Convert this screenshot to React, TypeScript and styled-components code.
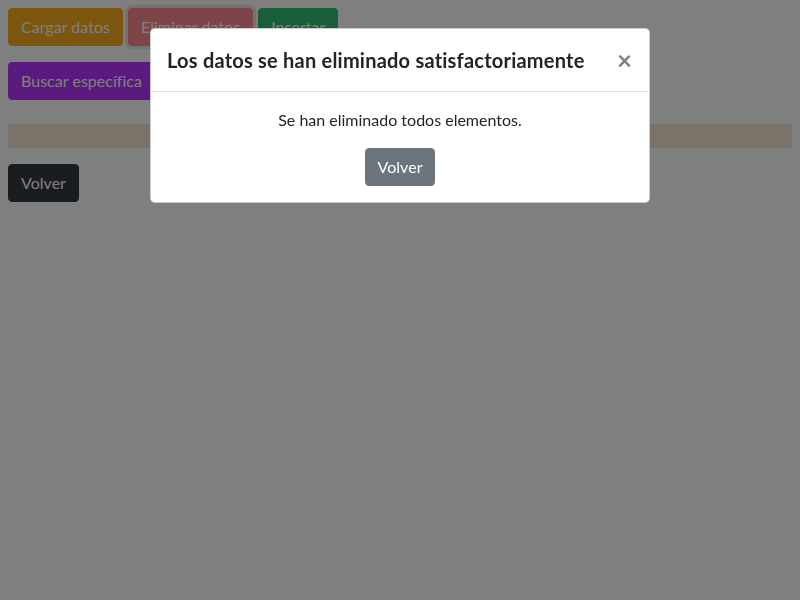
import React from 'react';
import styled, { createGlobalStyle } from 'styled-components';

const GlobalStyle = createGlobalStyle`
  html, body {
    margin: 0;
    padding: 0;
    width: 800px;
    height: 600px;
    background: #fff;
    font-family: 'Lato', 'Open Sans', sans-serif;
    color: #212529;
  }
  body {
    padding: 8px;
    box-sizing: border-box;
  }
`;

const Page = styled.div`
  display: flex;
  flex-direction: column;
`;

const ButtonRow = styled.div<{ $top?: number }>`
  display: flex;
  gap: 5px;
  margin-top: ${(p) => p.$top ?? 0}px;
`;

const Btn = styled.button<{ $bg: string; $ring?: boolean }>`
  font-family: inherit;
  font-size: 16px;
  line-height: 24px;
  letter-spacing: 0.03px;
  padding: 6px 12px;
  border: 1px solid ${(p) => p.$bg};
  border-radius: 4px;
  background: ${(p) => p.$bg};
  color: #fff;
  cursor: pointer;
  box-shadow: ${(p) => (p.$ring ? '0 0 0 3.2px rgba(210, 210, 215, 0.55)' : 'none')};
`;

const Bar = styled.div`
  margin-top: 24px;
  height: 24px;
  background: #f4e6d2;
`;

const Backdrop = styled.div`
  position: fixed;
  inset: 0;
  background: rgba(0, 0, 0, 0.5);
`;

const Modal = styled.div`
  position: fixed;
  top: 28px;
  left: 150px;
  width: 500px;
  box-sizing: border-box;
  background: #fff;
  border: 1px solid rgba(0, 0, 0, 0.2);
  border-radius: 5px;
  display: flex;
  flex-direction: column;
`;

const ModalHeader = styled.div`
  display: flex;
  align-items: flex-start;
  justify-content: space-between;
  padding: 16px;
  border-bottom: 1px solid #dee2e6;
`;

const ModalTitle = styled.h5`
  margin: 0;
  font-size: 20px;
  line-height: 30px;
  font-weight: 700;
  letter-spacing: 0.22px;
  color: #212529;
  white-space: nowrap;
`;

const Close = styled.button`
  background: transparent;
  border: 0;
  padding: 0 1px 0 0;
  margin: 0;
  font-family: inherit;
  font-size: 26px;
  line-height: 30px;
  font-weight: 700;
  color: #000;
  opacity: 0.5;
  cursor: pointer;
`;

const ModalBody = styled.div`
  padding: 16px;
  display: flex;
  flex-direction: column;
  align-items: center;
  text-align: center;
`;

const Message = styled.p`
  margin: 0 0 16px;
  font-size: 16px;
  line-height: 24px;
`;

export default function App() {
  return (
    <>
      <GlobalStyle />
      <Page>
        <ButtonRow>
          <Btn $bg="#f8ad1e">Cargar datos</Btn>
          <Btn $bg="#fc8a92" $ring>Eliminar datos</Btn>
          <Btn $bg="#32bc6e">Insertar</Btn>
        </ButtonRow>
        <ButtonRow $top={16}>
          <Btn $bg="#b634ff">Buscar específica</Btn>
        </ButtonRow>
        <Bar />
        <ButtonRow $top={16}>
          <Btn $bg="#343a40">Volver</Btn>
        </ButtonRow>
      </Page>
      <Backdrop />
      <Modal>
        <ModalHeader>
          <ModalTitle>Los datos se han eliminado satisfactoriamente</ModalTitle>
          <Close aria-label="Close">×</Close>
        </ModalHeader>
        <ModalBody>
          <Message>Se han eliminado todos elementos.</Message>
          <Btn $bg="#6c757d">Volver</Btn>
        </ModalBody>
      </Modal>
    </>
  );
}
